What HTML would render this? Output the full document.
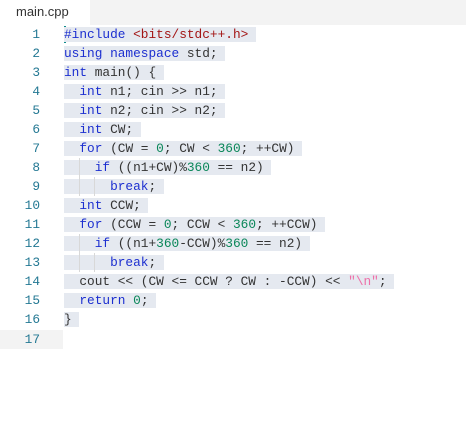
<!DOCTYPE html><html><head><style>
body{margin:0;width:466px;height:421px;background:#fff;overflow:hidden;font-family:"Liberation Mono",monospace;}
.hdr{position:absolute;top:0;left:0;width:466px;height:25px;background:#f3f3f3;}
.tab{position:absolute;top:0;left:0;width:90px;height:25px;background:#fff;font:13px "Liberation Sans",sans-serif;color:#333;line-height:23px;padding-left:16px;box-sizing:border-box;}
.ln{position:absolute;left:0;width:40px;text-align:right;font-size:12.8px;color:#237893;height:19px;line-height:19px;}
.code{position:absolute;left:64px;font-size:12.8px;height:19px;line-height:19px;color:#333;white-space:pre;}
.hl{background:#e5e9f0;}
.k{color:#1c2fd0}.n{color:#098658}.s{color:#a31515}.e{color:#ee6fa8}
.g{position:absolute;width:1px;background:#d8d8d8;}
</style></head><body>
<div class="hdr"><div class="tab">main.cpp</div></div>
<div style="position:absolute;left:0;top:330px;width:63px;height:19px;background:#f3f3f3"></div>
<div style="position:absolute;left:64px;top:26px;width:2px;height:17px;background:#0e8a8a"></div>
<div class="ln" style="top:25px">1</div><div class="code" style="top:25px"><span class="hl"><span class="k">#include</span> <span class="s">&lt;bits/stdc++.h&gt;</span> </span></div>
<div class="ln" style="top:44px">2</div><div class="code" style="top:44px"><span class="hl"><span class="k">using namespace</span> std; </span></div>
<div class="ln" style="top:63px">3</div><div class="code" style="top:63px"><span class="hl"><span class="k">int</span> main() { </span></div>
<div class="ln" style="top:82px">4</div><div class="code" style="top:82px"><span class="hl">  <span class="k">int</span> n1; cin &gt;&gt; n1; </span></div>
<div class="ln" style="top:101px">5</div><div class="code" style="top:101px"><span class="hl">  <span class="k">int</span> n2; cin &gt;&gt; n2; </span></div>
<div class="ln" style="top:120px">6</div><div class="code" style="top:120px"><span class="hl">  <span class="k">int</span> CW; </span></div>
<div class="ln" style="top:139px">7</div><div class="code" style="top:139px"><span class="hl">  <span class="k">for</span> (CW = <span class="n">0</span>; CW &lt; <span class="n">360</span>; ++CW) </span></div>
<div class="ln" style="top:158px">8</div><div class="code" style="top:158px"><span class="hl">    <span class="k">if</span> ((n1+CW)%<span class="n">360</span> == n2) </span></div>
<div class="ln" style="top:177px">9</div><div class="code" style="top:177px"><span class="hl">      <span class="k">break</span>; </span></div>
<div class="ln" style="top:196px">10</div><div class="code" style="top:196px"><span class="hl">  <span class="k">int</span> CCW; </span></div>
<div class="ln" style="top:215px">11</div><div class="code" style="top:215px"><span class="hl">  <span class="k">for</span> (CCW = <span class="n">0</span>; CCW &lt; <span class="n">360</span>; ++CCW) </span></div>
<div class="ln" style="top:234px">12</div><div class="code" style="top:234px"><span class="hl">    <span class="k">if</span> ((n1+<span class="n">360</span>-CCW)%<span class="n">360</span> == n2) </span></div>
<div class="ln" style="top:253px">13</div><div class="code" style="top:253px"><span class="hl">      <span class="k">break</span>; </span></div>
<div class="ln" style="top:272px">14</div><div class="code" style="top:272px"><span class="hl">  cout &lt;&lt; (CW &lt;= CCW ? CW : -CCW) &lt;&lt; <span class="e">"\n"</span>; </span></div>
<div class="ln" style="top:291px">15</div><div class="code" style="top:291px"><span class="hl">  <span class="k">return</span> <span class="n">0</span>; </span></div>
<div class="ln" style="top:310px">16</div><div class="code" style="top:310px"><span class="hl">} </span></div>
<div class="ln" style="top:330px">17</div>
<div class="g" style="left:79px;top:158px;height:38px"></div>
<div class="g" style="left:94px;top:177px;height:19px"></div>
<div class="g" style="left:79px;top:234px;height:38px"></div>
<div class="g" style="left:94px;top:253px;height:19px"></div>
</body></html>
